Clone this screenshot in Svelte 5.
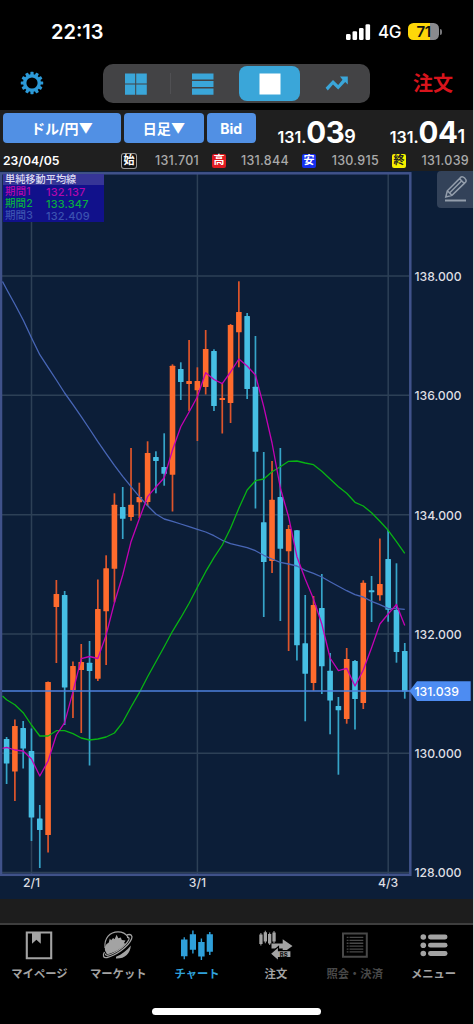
<script>
  const STEP = 8.295;
  const X0 = 6.6;
  const px = (i) => +(X0 + STEP * i).toFixed(2);

  // [high, body top, body bottom, low, rising]
  const candles = [
    [737, 739, 763.5, 784, 0], [719.5, 726, 771.5, 801, 1], [721, 728, 748.5, 768.5, 0],
    [728.5, 751, 817.5, 841, 0], [805, 818.5, 830, 868, 0], [681.5, 682, 835, 852.5, 1],
    [580, 594, 607, 663, 1], [591, 595, 687.5, 725, 0], [661.5, 666, 690, 718, 1],
    [644, 662, 670, 733, 1], [641, 662.7, 671, 765.5, 0], [579.5, 609, 678.7, 681, 1],
    [555.3, 568.3, 611.3, 665, 1], [493.3, 504.7, 568.7, 602.3, 1], [487, 507, 518.7, 539, 0],
    [448, 504.7, 517, 520.7, 1], [482.7, 497, 502.3, 518, 1], [441.3, 453, 502, 506, 1],
    [451.3, 457, 461, 493.3, 0], [433.3, 467, 473.7, 485.7, 0], [364.3, 365.7, 474.7, 511.5, 1],
    [362.3, 369, 382, 400, 0], [340, 381, 384, 411, 1], [367.3, 381, 390.3, 441, 1],
    [330, 349, 387, 394.5, 1], [349.3, 351, 406, 411, 0], [383, 398, 400, 433.5, 1],
    [324, 325, 403, 423, 1], [281.3, 312, 332.3, 367.3, 1], [313, 316, 389, 399, 0],
    [336, 386.7, 451.7, 508.5, 0], [452, 522.3, 562, 617, 0], [461, 499.7, 561, 573, 1],
    [448, 497, 548.7, 621, 0], [525, 529, 551.3, 651, 1], [530, 530.3, 645.3, 660.5, 0],
    [595, 643.3, 673.7, 721.3, 0], [596, 605, 683, 690.7, 1], [574, 608, 666.3, 694, 0],
    [653, 670.7, 700.5, 734.3, 0], [697, 706, 710.3, 774.7, 0], [648, 659, 719, 723.7, 1],
    [660, 661, 699, 729.5, 0], [580.3, 582.7, 703, 709, 1], [576, 590.3, 592.3, 622, 0],
    [538.5, 584, 595.3, 600.7, 1], [530, 559, 609.7, 621.7, 0], [563.3, 610, 652, 662.7, 0],
    [643, 651, 691.5, 698.7, 0]
  ];

  const short = [747.3, 750, 751, 759, 776, 761, 735, 722.7, 691.7, 658.7, 656.5, 658.5, 635, 602.7, 575,
    541.7, 518.7, 496.7, 487, 477.7, 450, 426.7, 412, 396.7, 372.7, 379.5, 383.7, 372, 359, 366, 375,
    406.7, 443, 488, 517, 556.7, 579, 599, 624, 658, 670.7, 668.3, 686, 670, 647.7, 624, 614, 604.5, 625.5];
  const middle = [699.7, 704.7, 712.7, 725, 736, 736, 730.7, 730.7, 733.7, 738, 740, 739, 737, 733, 722.3,
    707, 692.7, 676.7, 661.7, 646.7, 631.3, 617.7, 603.3, 587.3, 571.7, 557.7, 545, 528.3, 508.3, 490,
    480.7, 479, 471.7, 466.7, 461.3, 461, 463, 464.7, 471.3, 479, 486.7, 493.3, 502.3, 506, 512.7, 521.3,
    530.3, 541.7, 553.3];
  const long = [289.3, 304.3, 320, 337.7, 354.7, 367.3, 380, 393, 404.7, 416.7, 429, 441.7, 453.7, 465.3,
    476.3, 486.7, 496.7, 505.7, 514, 519, 521.3, 524, 526.7, 529.3, 532, 535.7, 540.3, 543.7, 545.7,
    547.7, 550.7, 555.3, 559, 562.3, 564, 566, 570.3, 573.3, 577, 581.7, 586.3, 590.7, 594.7, 597, 601.3,
    604.7, 608.3, 608.7, 609.3];
  const line = (start, ys) => [`2.5,${start}`, ...ys.map((y, i) => `${px(i)},${y}`)].join(' ');

  const prices = [[276, '138.000'], [395.3, '136.000'], [514.7, '134.000'], [634, '132.000'], [753.3, '130.000'], [872.5, '128.000']];
  const dates = [[31.5, '2/1'], [197.4, '3/1'], [388.2, '4/3']];

  const teeth = Array.from({ length: 12 }, (_, i) => i * 30);
  const ohlc = [['始', '131.701', 'open'], ['高', '131.844', 'high'], ['安', '130.915', 'low'], ['終', '131.039', 'close']];
  const averages = [['期間1', '132.137', 'm1'], ['期間2', '133.347', 'm2'], ['期間3', '132.409', 'm3']];
</script>

<div class="app">
  <div class="status">
    <span class="clock">22:13</span>
    <div class="radio">
      <svg class="signal" width="25" height="16" viewBox="0 0 25 16">
        <rect x="0" y="10" width="4.6" height="6" rx="1.3" /><rect x="6.5" y="7.2" width="4.6" height="8.8" rx="1.3" />
        <rect x="13" y="4" width="4.6" height="12" rx="1.3" /><rect x="19.5" y="0.3" width="4.6" height="15.7" rx="1.3" />
      </svg>
      <span class="net">4G</span>
      <span class="battery">71</span><i class="nub"></i>
    </div>
  </div>

  <div class="toolbar">
    <svg class="gear" width="24" height="24" viewBox="-12 -12 24 24">
      {#each teeth as a}
        <rect x="-1.6" y="-11.2" width="3.2" height="4" rx="0.6" transform="rotate({a})" />
      {/each}
      <circle r="7.3" />
    </svg>
    <div class="segments">
      <div class="seg">
        <svg width="22" height="22"><path d="M0 .5h10.2v10H0zM11.2 .5h10.6v10H11.2zM0 11.5h10.2v10.3H0zM11.2 11.5h10.6v10.3H11.2z" /></svg>
      </div>
      <div class="seg split">
        <svg width="22" height="22"><path d="M0 .5h21.5v6H0zM0 8h21.5v6H0zM0 15.5h21.5v6.3H0z" /></svg>
      </div>
      <div class="seg on"><svg width="22" height="22"><rect x="0.5" y="0.5" width="21" height="21" /></svg></div>
      <div class="seg">
        <svg width="24" height="16" viewBox="0 0 24 16"><path d="M15 .6h7.8v8l-2.6-2.6-7 7.6-5.2-5.2-5.2 6L.6 11.8 8 4l5.2 5.1 4.3-5.3z" /></svg>
      </div>
    </div>
    <span class="order">注文</span>
  </div>

  <div class="rates">
    <div class="btn pair">ドル/円▼</div>
    <div class="btn span">日足▼</div>
    <div class="btn bid">Bid</div>
    <div class="rate first"><small>131.</small><b>03</b><em>9</em></div>
    <div class="rate"><small>131.</small><b>04</b><em>1</em></div>
  </div>

  <div class="ohlc">
    <span class="date">23/04/05</span>
    {#each ohlc as [label, value, kind]}
      <div class="quote"><span class="tag {kind}">{label}</span><span class="val">{value}</span></div>
    {/each}
  </div>

  <div class="chart">
    <svg class="plot" width="473" height="728" viewBox="0 171 473 728">
      <g class="grid">
        {#each prices as [y]}<line x1="2" x2="410" y1={y} y2={y} />{/each}
        {#each dates as [x]}<line x1={x} x2={x} y1="173" y2="874" />{/each}
      </g>
      <rect class="frame" x="1" y="173.3" width="409.3" height="701.5" />
      {#each candles as [hi, top, bottom, lo, up], i}
        <g class={up ? 'up' : 'down'}>
          <rect class="wick" x={px(i) - 0.85} y={hi} width="1.7" height={lo - hi} />
          <rect x={px(i) - 2.8} y={top} width="5.6" height={bottom - top} rx="0.5" />
        </g>
      {/each}
      <polyline class="long" points={line(281.5, long)} />
      <polyline class="middle" points={line(696, middle)} />
      <polyline class="short" points={line(748.3, short)} />
      <line class="last" x1="2" x2="412" y1="691" y2="691" />
      <path class="flag" d="M409.5 691 417 681.3h53.7v19.6H417z" />
      {#each prices as [y, label]}<text x="414.5" y={y + 4.9}>{label}</text>{/each}
      <text class="now" x="414.5" y="696">131.039</text>
      {#each dates as [x, label]}<text class="day" x={x} y="886.5">{label}</text>{/each}
    </svg>

    <div class="legend">
      <div class="title">単純移動平均線</div>
      {#each averages as [name, value, kind]}
        <div class="avg {kind}"><span>{name}</span><span>{value}</span></div>
      {/each}
    </div>

    <div class="pencil">
      <svg width="24" height="28" viewBox="0 0 24 28">
        <path d="M1.8 22 3.3 15.8 15.5 3.6l4.8 4.8L8 20.4zM3.3 15.8 8 20.4M5.500 18 17.500 6M15.5 3.6l1.7-1.7c2-1 5.6 2.5 4.8 4.8l-1.7 1.7" />
        <path d="M1 25.5h21" stroke-width="2" />
      </svg>
    </div>
  </div>

  <div class="gap"></div>

  <div class="tabs">
    <div class="tab">
      <svg width="36" height="32" viewBox="0 0 36 32"><path d="M5.8 3.5h24.4v25.8H5.8z" fill="none" stroke="#a3a3a3" stroke-width="2.1" /><path d="M11 3h8.8v11.7l-4.4-4-4.4 4z" /></svg>
      <span>マイページ</span>
    </div>
    <div class="tab">
      <svg width="36" height="32" viewBox="0 0 36 32">
        <path d="M5 19C4 9 10 2.800 18 2.800c4.500 0 8 2 10 5" fill="none" stroke="#a3a3a3" stroke-width="1.2" />
        <path d="M5.200 22c-1-4 .5-7 3.600-8.500l1-4 1.300 1.800 2-2.300 1.500 1.200 2-4.500 1.700 3.500 2.500-.7 1 2.500 3.700.5-1.500 2.500 1.500 1C21 20 14 24 7 25.300z" />
        <path d="M16 27.800c6-2.500 11-6.500 14.800-11.300C30.500 24.500 24.500 30 16 29.600z" />
        <path d="M27 5.800c4-1 6 .6 4.500 4.300C28 18.500 15 26.500 7 28.500c-4 .8-4.500-2.500-2.500-5.500M27 8.500c2-.4 2.500.5 1.700 2.500C25 18 14 24.800 8 26.200c-2 .3-2.700-.3-2.500-1.500" fill="none" stroke="#a3a3a3" stroke-width="1.300" />
      </svg>
      <span>マーケット</span>
    </div>
    <div class="tab active">
      <svg width="36" height="32" viewBox="0 0 36 32"><path d="M2 10.500h6.500v16.800H2zM10.800 5.200h6.200v15.600h-6.200zM19.200 13h6.400v14.500h-6.400zM27.700 5.200h6.200v17.500h-6.200zM4.600 8.200h1.300v22H4.600zM13.200 1.600h1.400v23h-1.400zM21.700 9.500h1.400v21.600h-1.400zM30.100 3h1.400v23h-1.400z" /></svg>
      <span>チャート</span>
    </div>
    <div class="tab">
      <svg width="36" height="32" viewBox="0 0 36 32">
        <path d="M1.300 5.500h3.300v9.500H1.300zM5.700 3.300h3.300v9.300H5.700zM10 5h3.300v9.500H10zM14.400 3.500h3.300v9h-3.300zM2.400 4h1v12.500h-1zM6.800 1.700h1v12.500h-1zM11.200 3.500h1v12.500h-1zM15.500 2h1v12h-1z" />
        <path d="M13.500 14.500h11.200v-4.200l9.800 6.700-9.800 7v-4.400H13.500z" />
        <path d="M12.200 24.800 20.500 17.500v4.200h12.500v6.800H20.500v3.500z" stroke="#000" stroke-width="1.200" />
        <text x="21.800" y="27.500">RS</text>
      </svg>
      <span>注文</span>
    </div>
    <div class="tab dim">
      <svg width="36" height="32" viewBox="0 0 36 32"><path d="M6 4.500h23.800v23.300H6z" fill="none" stroke="#484848" stroke-width="2" /><path d="M9.700 7.800h1.800v1.300H9.700zM12.500 7.800h13.800v1.300H12.500zM9.700 10.700h1.800v1.300H9.700zM12.500 10.700h13.800v1.300H12.500zM9.700 13.600h1.800v1.300H9.700zM12.500 13.600h13.800v1.300H12.500zM9.700 16.500h1.800v1.300H9.700zM12.500 16.500h13.800v1.300H12.500zM9.700 19.400h1.800v1.300H9.700zM12.500 19.400h13.800v1.300H12.500zM9.700 22.300h1.800v1.300H9.700zM12.500 22.300h13.800v1.300H12.500z" /></svg>
      <span>照会・決済</span>
    </div>
    <div class="tab">
      <svg width="36" height="32" viewBox="0 0 36 32">
        {#each [8, 16.200, 24.500] as y}
          <circle cx="7.300" cy={y} r="2.800" /><rect x="12" y={y - 2.400} width="19.500" height="4.800" rx="2.400" />
        {/each}
      </svg>
      <span>メニュー</span>
    </div>
  </div>
  <div class="home"></div>
</div>

<style>
  :global(body) { background: #d4d4d4; overflow: hidden; }
  .app {
    width: 473px; height: 1024px; background: #000; color: #fff; overflow: hidden;
    display: flex; flex-direction: column; box-sizing: border-box;
    font-family: Inter, "Noto Sans CJK JP", sans-serif;
  }
  .status { height: 62px; flex: none; display: flex; justify-content: space-between; box-sizing: border-box; padding: 1px 31px 0 51px; align-items: center; }
  .clock { font-size: 20px; font-weight: 600; line-height: 24px; }
  .radio { display: flex; align-items: center; }
  .signal { fill: #fff; }
  .net { font-size: 17px; font-weight: 500; margin: 1px 7px 0 7px; letter-spacing: -.4px; }
  .battery {
    width: 31px; height: 17px; border-radius: 5.500px; color: #111; font-size: 15px; font-weight: 600;
    line-height: 17px; text-align: center; letter-spacing: -.5px;
    background: linear-gradient(90deg, #fed709 0 22px, #8a8a8e 22px);
  }
  .nub { width: 2px; height: 6px; background: #77777a; border-radius: 0 2px 2px 0; margin-left: 1px; }
  .toolbar { height: 48px; flex: none; display: flex; box-sizing: border-box; padding: 2px 20px 0 19.500px; justify-content: space-between; align-items: flex-start; }
  .gear { fill: #2c9ad8; margin-top: 7px; }
  .gear circle { fill: none; stroke: #2c9ad8; stroke-width: 3.400; }
  .segments { display: flex; width: 267px; height: 39px; background: #434345; border-radius: 10px; margin-left: 16.500px; }
  .seg { width: 66.800px; display: flex; align-items: center; justify-content: center; fill: #3aa6d9; box-sizing: border-box; }
  .split { background: linear-gradient(#505053, #505053) 0 50% / 1px 21px no-repeat; }
  .on { background: #3aa6d9; border-radius: 8px; fill: #fff; width: 61px; height: 35px; margin: 2px 3px; }
  .order { color: #d8141c; font-size: 20px; font-weight: 700; line-height: 40px; }
  .rates { height: 37px; flex: none; background: #1f1f1f; display: flex; padding: 3px 8px 0 3px; box-sizing: border-box; }
  .btn { height: 30px; border-radius: 4px; background: #5190e4; font-size: 14px; font-weight: 700; line-height: 31px; text-align: center; margin-right: 3px; flex: none; }
  .pair { width: 118px; } .span { width: 80px; } .bid { width: 48.500px; }
  .rate { display: flex; align-items: baseline; font-weight: 700; line-height: 37px; height: 37px; margin-left: auto; }
  .rate.first { margin-left: 19px; }
  .rate small { font-size: 16px; font-weight: 600; }
  .rate b { font-size: 29.500px; letter-spacing: -.5px; font-weight: 700; line-height: 38px; }
  .rate em { font-size: 18px; font-style: normal; font-weight: 600; }
  .ohlc { height: 24px; flex: none; background: #1f1f1f; display: flex; align-items: center; padding: 3px 4px 0 3px; box-sizing: border-box; font-weight: 600; justify-content: space-between; }
  .date { width: 106px; font-size: 12.200px; }
  .quote { display: flex; align-items: center; justify-content: space-between; width: 77px; }
  .tag { width: 14px; height: 14px; line-height: 13.500px; text-align: center; font-size: 11px; font-weight: 700; border-radius: 2px; box-sizing: border-box; }
  .val { color: #aaa; font-size: 12.500px; font-weight: 500; letter-spacing: .3px; }
  .open { box-shadow: 0 0 0 1px #999; background: #111; }
  .high { background: #e01b22; } .low { background: #1630ee; } .close { background: #f6f000; color: #222; }
  .chart { height: 728px; flex: none; background: #0c1e38; position: relative; }
  .plot { display: block; }
  .grid { stroke: #2d4056; stroke-width: 1.500; }
  .frame { fill: none; stroke: #40528a; stroke-width: 2.500; }
  .up { fill: #ff6b2d; } .down { fill: #46bfe4; }
  .up .wick { fill: #df552b; } .down .wick { fill: #36a4c8; }
  polyline { fill: none; stroke-width: 1.300; stroke-linejoin: round; }
  .long { stroke: #4866b6; } .middle { stroke: #08b413; } .short { stroke: #c402b4; }
  .last { stroke: #4c80dc; stroke-width: 1.400; }
  .flag { fill: #4d8cf2; }
  .plot text { fill: #dedfe3; font-size: 12.200px; font-weight: 500; }
  .plot .now { fill: #fff; }
  .plot .day { text-anchor: middle; }
  .legend { position: absolute; left: 3px; top: 3px; width: 101px; height: 48px; background: #11118b; font-size: 10.500px; line-height: 12px; }
  .title { background: #363597; color: #dcdcf0; height: 11px; line-height: 10px; font-size: 10.200px; font-weight: 500; padding-left: 2px; margin-bottom: 1px; }
  .avg { display: flex; padding-left: 2px; height: 12px; font-weight: 500; font-size: 11px; letter-spacing: .15px; }
  .avg span:first-child { width: 41px; font-size: 10.500px; letter-spacing: .1px; }
  .m1 { color: #b007ae; } .m2 { color: #08ac42; } .m3 { color: #3b51b0; }
  .pencil { position: absolute; right: 0; top: 0; width: 36px; height: 37px; background: #334259; border-radius: 4px 0 0 4px; box-sizing: border-box; padding: 4px 0 0 7px; }
  .pencil svg { fill: none; stroke: #939dab; stroke-width: 1.500; display: block; }
  .gap { height: 24px; flex: none; background: #1d1d1d; }
  .tabs { height: 78px; flex: none; display: grid; grid-template-columns: repeat(6, 78.830px); border-top: 2px solid #3e3e3e; box-sizing: border-box; padding-top: 4px; }
  .tab { display: flex; flex-direction: column; align-items: center; color: #a3a3a3; fill: currentColor; font-size: 11.300px; font-weight: 700; line-height: 16px; gap: 5px; white-space: nowrap; }
  .tab text { font-size: 6px; font-weight: 800; fill: #111; }
  .active { color: #2fa0da; } .dim { color: #484848; }
  .home { width: 169px; height: 6.500px; border-radius: 4px; background: #fff; margin: 7px 0 0 152px; }
</style>
